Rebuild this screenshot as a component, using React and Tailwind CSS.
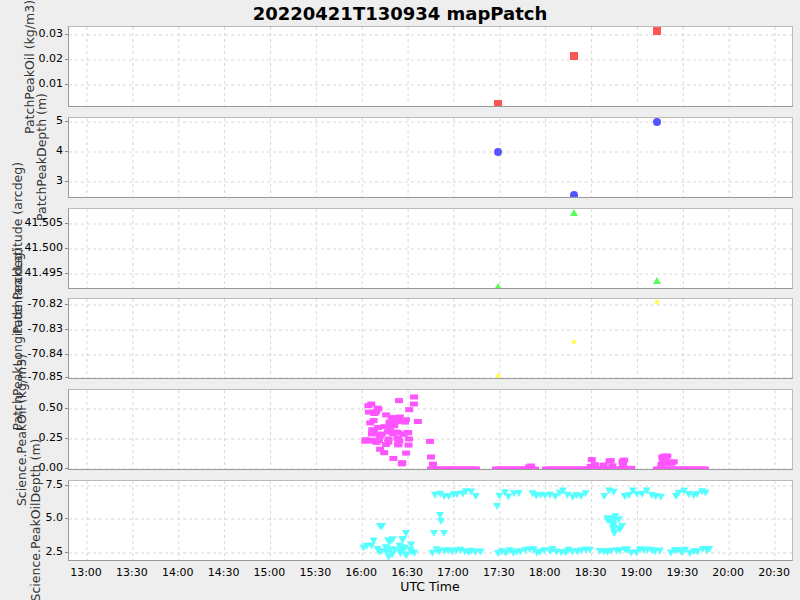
import React from "react";

function rng(seed) {
  let a = seed;
  return () => {
    a |= 0; a = (a + 0x6d2b79f5) | 0;
    let t = Math.imul(a ^ (a >>> 15), 1 | a);
    t = (t + Math.imul(t ^ (t >>> 7), 61 | t)) ^ t;
    return ((t ^ (t >>> 14)) >>> 0) / 4294967296;
  };
}

const W = 725, H = 81;
const gx = Array.from({ length: 16 }, (_, k) => 18 + k * 45.87);

const r5 = rng(7);
const p5 = [];
for (let i = 0; i < 60; i++) {
  const x = 296 + r5() * 45;
  const v = Math.max(0, 0.4 - (x - 296) * 0.005 + (r5() - 0.5) * 0.35);
  p5.push([x, 79 - v * 120]);
}
for (let i = 0; i < 10; i++) p5.push([325 + r5() * 25, 79 - (0.2 + r5() * 0.4) * 120]);
p5.push([330, 79 - 0.57 * 120]); p5.push([345, 79 - 0.6 * 120]);
p5.push([361, 79 - 0.23 * 120]); p5.push([362, 79 - 0.1 * 120]); p5.push([364, 79 - 0.04 * 120]);
[[362, 408], [427, 467], [477, 517], [520, 560]].forEach(([a, b]) => { for (let x = a; x <= b; x += 3) p5.push([x, 79]); });
[[588, 638]].forEach(([a, b]) => { for (let x = a; x <= b; x += 3) p5.push([x, 79]); });
p5.push([460, 77]); p5.push([462, 76]);
for (let i = 0; i < 12; i++) p5.push([518 + r5() * 45, 79 - r5() * 0.09 * 120]);
for (let i = 0; i < 12; i++) p5.push([588 + r5() * 18, 79 - r5() * 0.11 * 120]);

const r6 = rng(3);
const p6 = [];
const lowY = () => 68 + r6() * 4;
const hiY = () => 9 + r6() * 7;
for (let i = 0; i < 30; i++) p6.push([294 + r6() * 55, 58 + r6() * 18]);
p6.push([311, 45]); p6.push([313, 45]); p6.push([337, 52]); p6.push([365, 52]); p6.push([375, 52]); p6.push([372, 40]); p6.push([371, 34]); p6.push([428, 25]);
[[362, 412], [427, 520], [530, 590], [600, 640]].forEach(([a, b]) => {
  for (let x = a; x <= b; x += 4) p6.push([x + r6() * 2, lowY()]);
});
[[365, 408], [430, 450], [462, 520], [534, 546], [554, 592], [605, 637]].forEach(([a, b]) => {
  for (let x = a; x <= b; x += 4.5) p6.push([x + r6() * 2, hiY()]);
});
for (let i = 0; i < 20; i++) p6.push([538 + r6() * 16, 32 + r6() * 20]);

function Grid({ ys }) {
  return (
    <g stroke="#d8d8d8" strokeDasharray="3 3" strokeWidth="1">
      {gx.map((x, i) => <line key={"v" + i} x1={x} x2={x} y1={0} y2={H} />)}
      {ys.map((y, i) => <line key={"h" + i} x1={0} x2={W} y1={y} y2={y} />)}
    </g>
  );
}

function Panel({ label, labelX, labelDy = 0, ticks, children }) {
  return (
    <div className="flex h-[81px]">
      <div className="relative w-[68px] h-full">
        <div className="absolute top-1/2 -translate-x-1/2 -translate-y-1/2 -rotate-90 whitespace-nowrap text-[12.5px] text-[#333]" style={{ left: labelX, marginTop: labelDy }}>{label}</div>
        {ticks.map(([t, y]) => (
          <React.Fragment key={t}>
            <div className="absolute right-[5px] text-[11px] leading-[12px] text-black" style={{ top: y - 6 }}>{t}</div>
            <div className="absolute right-0 w-[3px] h-px bg-[#888]" style={{ top: y }} />
          </React.Fragment>
        ))}
      </div>
      <div className="w-[725px] h-full bg-white border border-[#999] border-t-[#bbb] border-r-[#bbb] overflow-hidden">
        <svg width={W} height={H} className="block">
          <Grid ys={ticks.map((t) => t[1])} />
          {children}
        </svg>
      </div>
    </div>
  );
}

const xt = ["13:00","13:30","14:00","14:30","15:00","15:30","16:00","16:30","17:00","17:30","18:00","18:30","19:00","19:30","20:00","20:30"];

export default function App() {
  return (
    <div className="w-[800px] h-[600px] bg-[#eeeeee] overflow-hidden" style={{ fontFamily: '"DejaVu Sans", sans-serif' }}>
      <div className="h-[26px] flex items-center justify-center text-[18px] font-bold text-black pt-[1px]">20220421T130934 mapPatch</div>
      <div className="flex flex-col gap-[9.8px]">
        <Panel label="PatchPeakOil (kg/m3)" labelX={30} ticks={[["0.03", 8], ["0.02", 33], ["0.01", 58]]}>
          {[[429, 77], [505, 29], [588, 4]].map(([x, y], i) => <rect key={i} x={x - 4} y={y - 4} width={8} height={8} fill="#ff5555" />)}
        </Panel>
        <Panel label="PatchPeakDepth (m)" labelX={42} ticks={[["5", 4], ["4", 34], ["3", 64]]}>
          {[[429, 34], [505, 77], [588, 4]].map(([x, y], i) => <circle key={i} cx={x} cy={y} r={4} fill="#5555ff" />)}
        </Panel>
        <Panel label="PatchPeakLatitude (arcdeg)" labelX={18} ticks={[["41.505", 15], ["41.500", 40], ["41.495", 65]]}>
          {[[429, 78], [505, 4], [588, 72]].map(([x, y], i) => <polygon key={i} points={`${x},${y - 4} ${x + 4},${y + 3} ${x - 4},${y + 3}`} fill="#55ff55" />)}
        </Panel>
        <Panel label="PatchPeakLongitude (arcdeg)" labelX={18} ticks={[["-70.82", 6], ["-70.83", 31], ["-70.84", 56], ["-70.85", 79]]}>
          {[[429, 77], [505, 43], [588, 3]].map(([x, y], i) => <polygon key={i} points={`${x},${y - 3} ${x + 3},${y} ${x},${y + 3} ${x - 3},${y}`} fill="#ffff55" />)}
        </Panel>
        <Panel label="Science.PeakOil (kg/m3)" labelX={22} ticks={[["0.50", 19], ["0.25", 49], ["0.00", 79]]}>
          {p5.map(([x, y], i) => <rect key={i} x={x - 4} y={y - 2.5} width={8} height={5} fill="#ff55ff" />)}
        </Panel>
        <Panel label="Science.PeakOilDepth (m)" labelX={36} ticks={[["7.5", 5], ["5.0", 38], ["2.5", 72]]}>
          {p6.map(([x, y], i) => <polygon key={i} points={`${x - 4},${y - 3} ${x + 4},${y - 3} ${x},${y + 4}`} fill="#55ffff" />)}
        </Panel>
      </div>
      <div className="relative h-[40px]">
        {xt.map((t, k) => (
          <div key={t} className="absolute top-[4px] -translate-x-1/2 text-[11px] text-black" style={{ left: 86 + k * 45.87 }}>{t}</div>
        ))}
        <div className="absolute top-[17px] left-[430px] -translate-x-1/2 text-[12.5px] text-black">UTC Time</div>
      </div>
    </div>
  );
}
